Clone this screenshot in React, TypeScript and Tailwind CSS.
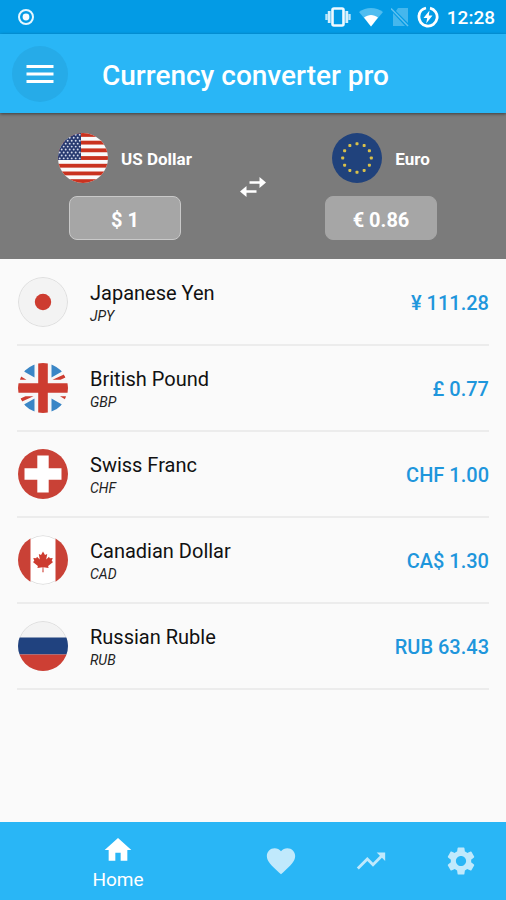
import { useState } from "react";
import type { ReactNode } from "react";
import { MdFavorite, MdHome, MdMenu, MdSettings, MdTrendingUp } from "react-icons/md";

type FlagCode = "us" | "eu" | "jp" | "gb" | "ch" | "ca" | "ru";

const STAR_ROWS = [0, 1, 2, 3, 4, 5, 6, 7, 8];
const STAR_COLS = [0, 1, 2, 3, 4, 5];

const flagArt: Record<FlagCode, ReactNode> = {
  us: (
    <>
      <rect width="50" height="50" fill="#fafafa" />
      {[0, 1, 2, 3, 4, 5, 6].map((i) => (
        <rect key={i} y={i * 7.7} width="50" height="3.85" fill="#c9321f" />
      ))}
      <rect width="23" height="27" fill="#283a70" />
      {STAR_ROWS.map((r) =>
        STAR_COLS.slice(r % 2).map((c) => (
          <circle key={`${r}-${c}`} cx={(r % 2 ? -0.3 : 1.7) + c * 4} cy={1.8 + r * 2.95} r="0.95" fill="#d5daea" />
        )),
      )}
    </>
  ),
  eu: (
    <>
      <rect width="50" height="50" fill="#20427c" />
      {Array.from({ length: 12 }, (_, i) => {
        const a = (i * Math.PI) / 6;
        return (
          <rect key={i} x={25 + 14.3 * Math.sin(a) - 1.5} y={25 - 14.3 * Math.cos(a) - 1.5} width="3" height="3" rx="0.8" fill="#d9c04a" />
        );
      })}
    </>
  ),
  jp: (
    <>
      <rect width="50" height="50" fill="#f3f3f3" />
      <circle cx="25" cy="25" r="8.2" fill="#cd3c30" />
      <circle cx="25" cy="25" r="24.5" fill="none" stroke="#dedede" />
    </>
  ),
  gb: (
    <>
      <rect width="50" height="50" fill="#f7f7f7" />
      <path
        d="M16.500 0v14.500L6 8.500 10 2zM33.500 0v14.500L44 8.500 40 2zM16.500 50V35.500L6 41.500 10 48zM33.500 50V35.500L44 41.500 40 48z"
        fill="#3a86c6"
      />
      <path d="M3 13.500l5.500 3.300H2zM34.500 16.800L46 11.500l1.500 3-5 2.300zM15.500 33.200L4 38.500l-1.500-3 5-2.300zM42 33.200h6l-1 3z" fill="#cd3c30" />
      <path d="M20.200 0h9.600v20.200H50v9.600H29.800V50h-9.600V29.800H0v-9.600h20.200z" fill="#cd3c30" />
    </>
  ),
  ch: (
    <>
      <rect width="50" height="50" fill="#c94136" />
      <path d="M19.300 6.500h11.400v12.800h12.800v11.400H30.700v12.800H19.300V30.700H6.500V19.300h12.800z" fill="#fff" />
    </>
  ),
  ca: (
    <>
      <rect width="50" height="50" fill="#fff" />
      <rect width="12.500" height="50" fill="#c94136" />
      <rect x="37.500" width="12.500" height="50" fill="#c94136" />
      <path d="M13 4a24.500 24.500 0 0124 0M13 46a24.500 24.500 0 0024 0" fill="none" stroke="#e0e0e0" />
      <path
        d="M25 16.500l2 3.600 2.200-1-1 5.400 2.800-2.700.8 1.500 2.900-.4-1 3 1.400 1-5 4.200.5 1.800-5.200-.7.200 5h-1.200l.2-5-5.200.7.500-1.800-5-4.200 1.400-1-1-3 2.900.4.800-1.500 2.800 2.700-1-5.400 2.200 1z"
        fill="#cd3c30"
      />
    </>
  ),
  ru: (
    <>
      <rect width="50" height="50" fill="#f3f3f3" />
      <circle cx="25" cy="25" r="24.500" fill="none" stroke="#dedede" />
      <rect y="16.500" width="50" height="17" fill="#20427f" />
      <rect y="33.500" width="50" height="16.500" fill="#cd3f34" />
    </>
  ),
};

function Flag({ code }: { code: FlagCode }) {
  return (
    <svg viewBox="0 0 50 50" aria-hidden="true" className="size-[50px] shrink-0 rounded-full">
      {flagArt[code]}
    </svg>
  );
}

function StatusBar() {
  return (
    <div className="flex h-[34px] items-center justify-between bg-[#039be5] pr-[11px] pl-[17px] text-white">
      <svg viewBox="0 0 18 18" aria-hidden="true" className="size-[18px]">
        <circle cx="9" cy="9" r="7" fill="none" stroke="#e6f7ff" strokeWidth="2" />
        <circle cx="9" cy="9" r="3.400" fill="#f4fbff" />
      </svg>
      <div className="flex items-center">
        <svg viewBox="0 0 26 20" aria-hidden="true" className="mr-2 h-5 w-[26px]">
          <rect x="7.500" y="1.500" width="11" height="17" rx="1.500" fill="none" stroke="#f0faff" strokeWidth="2.600" />
          <path d="M4.200 4v12M21.800 4v12" stroke="#d5f0fd" strokeWidth="2.800" />
          <path d="M1.500 7v6M24.500 7v6" stroke="#b9e4fa" strokeWidth="2.400" />
        </svg>
        <svg viewBox="0 0 24 20" aria-hidden="true" className="mr-2 h-5 w-6">
          <path d="M0 5C7-.5 17-.5 24 5L12 19.500z" fill="#4fbdf0" />
          <path d="M5 10.500c4.500-3.500 9.500-3.500 14 0l-7 9z" fill="#fff" />
        </svg>
        <svg viewBox="0 0 18 20" aria-hidden="true" className="mr-2 h-5 w-[18px]">
          <path d="M7 1h10v15L5 4zM2 6l12 13H2z" fill="#45b7ed" />
          <path d="M0 1.500L17 19" stroke="#62c2f0" strokeWidth="1.500" />
        </svg>
        <svg viewBox="0 0 22 22" aria-hidden="true" className="mr-2 size-[22px]">
          <path d="M13 2.100A9.100 9.100 0 112 10c.3-4 2.800-7 7-8" fill="none" stroke="#fff" strokeWidth="2.800" />
          <path d="M12.500 4.500l-6 7.500h3.700l-1 5.500 6.300-8h-3.700z" fill="#fff" />
        </svg>
        <span className="pt-[2px] text-[19px] leading-6 font-medium">12:28</span>
      </div>
    </div>
  );
}

interface SideProps {
  id: string;
  code: FlagCode;
  name: string;
  value: string;
  onChange?: (value: string) => void;
}

function ConverterSide({ id, code, name, value, onChange }: SideProps) {
  return (
    <div className="flex flex-col items-center gap-[13px]">
      <label htmlFor={id} className="flex items-center gap-[13px] text-[17px] leading-6 font-bold text-white">
        <Flag code={code} />
        <span className="pt-px">{name}</span>
      </label>
      <input
        id={id}
        type="text"
        value={value}
        readOnly={!onChange}
        onChange={(e) => onChange?.(e.target.value)}
        className={`h-11 w-28 rounded-lg border bg-[#a6a6a6] pt-1 text-center text-[20px] font-bold text-white outline-none ${
          onChange ? "border-[#c9c9c9]" : "border-[#a6a6a6]"
        }`}
      />
    </div>
  );
}

const rates: { code: FlagCode; name: string; symbol: string; amount: string }[] = [
  { code: "jp", name: "Japanese Yen", symbol: "JPY", amount: "¥ 111.28" },
  { code: "gb", name: "British Pound", symbol: "GBP", amount: "£ 0.77" },
  { code: "ch", name: "Swiss Franc", symbol: "CHF", amount: "CHF 1.00" },
  { code: "ca", name: "Canadian Dollar", symbol: "CAD", amount: "CA$ 1.30" },
  { code: "ru", name: "Russian Ruble", symbol: "RUB", amount: "RUB 63.43" },
];

export default function App() {
  const [amount, setAmount] = useState("$ 1");

  return (
    <div className="flex min-h-screen flex-col bg-[#fafafa] font-[Roboto,sans-serif]">
      <StatusBar />
      <header className="relative flex h-[79px] items-center gap-[34px] bg-[#29b6f6] px-3 text-white shadow-[0_1px_3px_rgba(0,0,0,0.5)]">
        <button type="button" aria-label="Menu" className="flex size-14 items-center justify-center rounded-full bg-[#26abe8]">
          <MdMenu className="size-9" />
        </button>
        <h1 className="pt-1 text-[28px] leading-8 font-medium">Currency converter pro</h1>
      </header>

      <section className="grid grid-cols-[1fr_26px_1fr] items-center bg-[#7b7b7b] px-[10px] pt-5 pb-[19px]">
        <ConverterSide id="from" code="us" name="US Dollar" value={amount} onChange={setAmount} />
        <button type="button" aria-label="Swap currencies" className="text-white">
          <svg viewBox="0 0 26 20" aria-hidden="true" className="h-5 w-[26px]">
            <path d="M9.500 5.500h11M5.500 14.500h11" stroke="currentColor" strokeWidth="2.600" />
            <path d="M19.500 0l6.500 5.500-6.500 5.500zM6.500 9L0 14.500 6.500 20z" fill="currentColor" />
          </svg>
        </button>
        <ConverterSide id="to" code="eu" name="Euro" value="€ 0.86" />
      </section>

      <main className="flex-1">
        <ul className="px-[17px] pt-px">
          {rates.map((rate) => (
            <li key={rate.symbol} className="flex h-[86px] items-center gap-[22px] border-b-2 border-[#ececec] pl-px">
              <Flag code={rate.code} />
              <div className="flex-1 pt-1">
                <p className="text-[20px] leading-6 text-[#111111]">{rate.name}</p>
                <p className="text-[14px] leading-[22px] text-[#222222] italic">{rate.symbol}</p>
              </div>
              <p className="pt-[2px] text-[20px] leading-6 font-medium text-[#1e96dc]">{rate.amount}</p>
            </li>
          ))}
        </ul>
      </main>

      <nav className="flex h-[78px] bg-[#29b6f6] text-white">
        <a href="#home" aria-current="page" className="flex flex-1 flex-col items-center pt-3 text-[19px] leading-7">
          <MdHome className="size-8" />
          Home
        </a>
        <a href="#favorites" aria-label="Favorites" className="flex w-[90px] items-center justify-center text-[#c0e9fc]">
          <MdFavorite className="size-[34px]" />
        </a>
        <a href="#trends" aria-label="Trends" className="flex w-[90px] items-center justify-center text-[#c0e9fc]">
          <MdTrendingUp className="size-[34px]" />
        </a>
        <a href="#settings" aria-label="Settings" className="flex w-[90px] items-center justify-center text-[#c0e9fc]">
          <MdSettings className="size-[34px]" />
        </a>
      </nav>
    </div>
  );
}
